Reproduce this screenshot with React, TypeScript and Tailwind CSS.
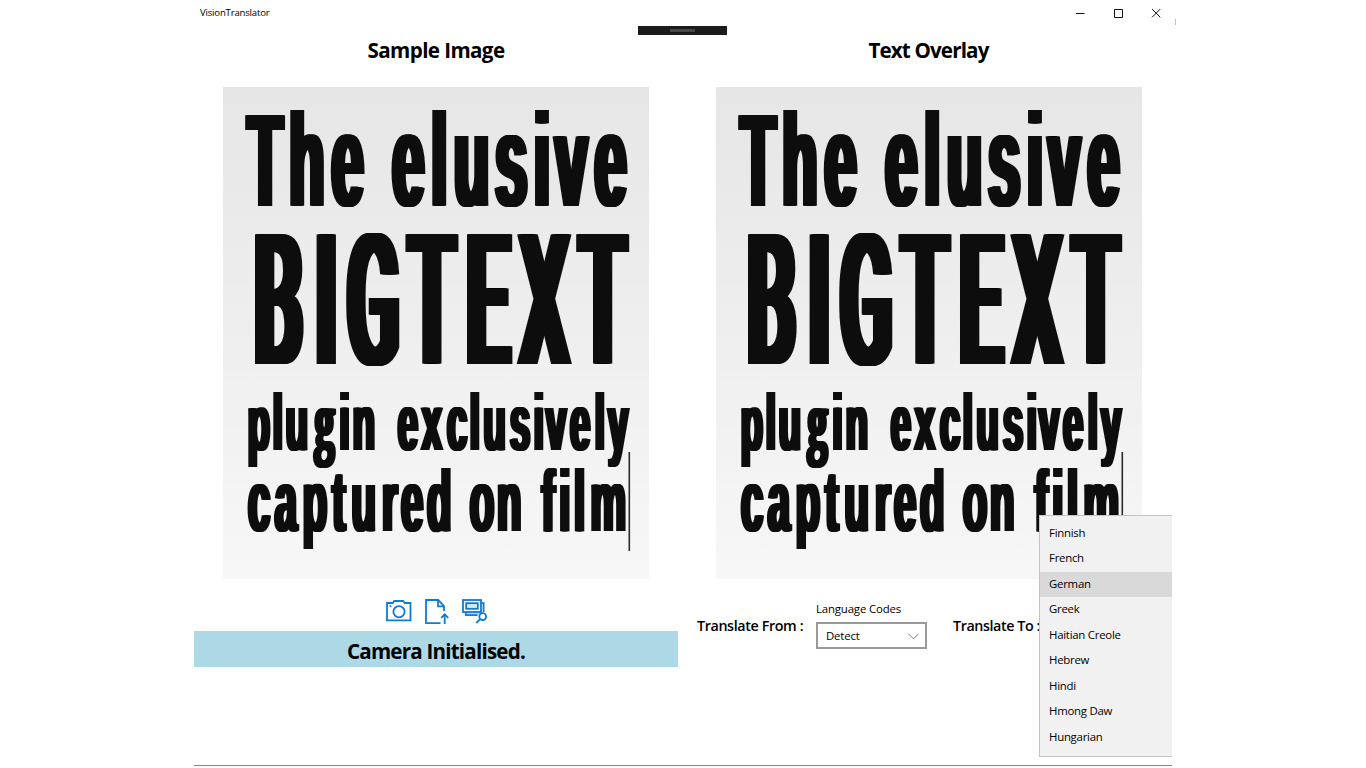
import React from "react";

type Line = { text: string; y: number; size: number; sx: number; spread: string; face: string; xs: number[] };

const NARROW = "font-['Liberation_Sans',sans-serif] font-bold";
const TITLE = "font-['Roboto',sans-serif] font-medium";

const LINES: Line[] = [
  { text: "The elusive", y: 118.5, size: 131, sx: 0.44, spread: "wide", face: NARROW, xs: [42.2, 83.9, 124.6, 155, 185.2, 216.2, 248.6, 288.2, 318.9, 348.2, 387.6] },
  { text: "BIGTEXT", y: 277, size: 181, sx: 0.42, spread: "title", face: TITLE, xs: [55.6, 103.2, 150.2, 208.9, 264.9, 321.2, 379.6] },
  { text: "plugin exclusively", y: 363, size: 79, sx: 0.46, spread: "slim", face: NARROW, xs: [35.9, 54.9, 73.9, 101.6, 121.6, 140.9, 160, 184.9, 208.9, 234.2, 251.9, 271.6, 297.2, 315.9, 333.2, 357.2, 376.9, 395.2] },
  { text: "captured on film", y: 444, size: 87, sx: 0.46, spread: "slim", face: NARROW, xs: [36.2, 62.9, 91.9, 115.9, 140.6, 166.9, 189.2, 216.2, 237, 258.9, 286.2, 305, 325.2, 341.9, 356.6, 385.2] },
];

const SPREADS: Record<string, number[]> = {
  slim: [-2.2, -1.1, 0, 1.1, 2.2],
  wide: [-3, -2, -1, 0, 1, 2, 3],
  title: [-5, -4, -3, -2, -1, 0, 1, 2, 3, 4, 5],
};

function Poster({ id }: { id: string }) {
  return (
    <svg width="426" height="492" viewBox="0 0 426 492" className="block">
      <defs>
        <linearGradient id={`${id}-shade`} x1="0" y1="0" x2="0" y2="1">
          <stop offset="0" stopColor="#e6e6e6" />
          <stop offset="0.6" stopColor="#f0f0f0" />
          <stop offset="1" stopColor="#f7f7f7" />
        </linearGradient>
        {Object.entries(SPREADS).map(([name, offsets]) => (
          <filter key={name} id={`${id}-${name}`} filterUnits="userSpaceOnUse" x="0" y="0" width="426" height="492">
            {offsets.map((dx, i) => (
              <feOffset key={i} in="SourceGraphic" dx={dx} result={`s${i}`} />
            ))}
            <feMerge>
              {offsets.map((_, i) => (
                <feMergeNode key={i} in={`s${i}`} />
              ))}
            </feMerge>
          </filter>
        ))}
      </defs>
      <rect width="426" height="492" fill={`url(#${id}-shade)`} />
      {LINES.map((l) => (
        <g key={l.text} filter={`url(#${id}-${l.spread})`}>
          <text
            transform={`scale(${l.sx} 1)`}
            x={l.xs.map((v) => (v / l.sx).toFixed(1)).join(" ")}
            y={l.y}
            fontSize={l.size}
            textAnchor="middle"
            fill="#0e0e0e"
            className={l.face}
            style={{ fontVariantLigatures: "none" }}
          >
            {l.text.split("g").map((part, i) => (
              <React.Fragment key={i}>
                {i > 0 && <tspan fontSize={76} className="font-['Open_Sans',sans-serif] font-bold">g</tspan>}
                {part}
              </React.Fragment>
            ))}
          </text>
        </g>
      ))}
      <rect x="405.5" y="365" width="1.6" height="99" fill="#2b2b2b" />
    </svg>
  );
}

const LANGUAGES = ["Finnish", "French", "German", "Greek", "Haitian Creole", "Hebrew", "Hindi", "Hmong Daw", "Hungarian"];

function CameraIcon() {
  return (
    <svg width="26" height="22" viewBox="0 0 26 22" fill="none" stroke="#0f7bd4" strokeWidth="1.8">
      <path d="M1 3H6.8L8.3 1H17.2L18.7 3H24.5V20.4H1Z" />
      <circle cx="13" cy="11.7" r="5.6" />
      <path d="M3.6 6.2H5.4" />
    </svg>
  );
}

function UploadIcon() {
  return (
    <svg width="24" height="26" viewBox="0 0 24 26" fill="none" stroke="#0f7bd4" strokeWidth="1.8">
      <path d="M15.5 24.2H1V1H13.2L19 7V12" />
      <path d="M13 1V7.3H19" />
      <path d="M19.7 25V15.2M16.2 18.8L19.7 15.2L23.2 18.8" />
    </svg>
  );
}

function PreviewIcon() {
  return (
    <svg width="26" height="25" viewBox="0 0 26 25" fill="none" stroke="#0f7bd4" strokeWidth="1.8">
      <path d="M4.6 13.8H21V14L16 16H4.6Z" fill="#b5d7f2" stroke="none" />
      <path d="M19 4.2H21.6V13M3.8 13V16.2H15.5" />
      <rect x="1" y="1" width="18" height="12" fill="#fff" />
      <rect x="4.2" y="4.2" width="11.6" height="5.6" fill="#d8eaf8" />
      <circle cx="20.7" cy="17.6" r="3.4" fill="#fff" />
      <path d="M18.2 20.1L14.3 24" />
    </svg>
  );
}

export default function App() {
  return (
    <div className="relative h-[768px] w-[1366px] overflow-hidden bg-white font-['Open_Sans','Noto_Sans',sans-serif] text-black">
      <div className="ml-[194px] flex h-[766px] w-[978px] flex-col border-b border-[#4b98d1]">
        <header className="flex h-[26px] shrink-0 items-center justify-between pl-[6px]">
          <span className="text-[9.6px] tracking-[-0.2px]">VisionTranslator</span>
          <div className="flex items-center gap-[28px] pr-[11px]">
            <svg width="10" height="10" viewBox="0 0 10 10" stroke="#111"><path d="M1 5.5H9.5" /></svg>
            <svg width="10" height="10" viewBox="0 0 10 10" stroke="#111" fill="none"><path d="M1.5 1.5H9.5V9.5H1.5Z" /></svg>
            <svg width="10" height="10" viewBox="0 0 10 10" stroke="#111" fill="none"><path d="M1 1L9.3 9.3M9.3 1L1 9.3" /></svg>
          </div>
        </header>
        <main className="flex gap-2">
          <section className="flex w-[484px] flex-col">
            <h1 className="h-[61px] pt-[8px] text-center text-[20.6px] leading-8 font-bold tracking-[-0.6px]">Sample Image</h1>
            <div className="pl-[29px]"><Poster id="sample" /></div>
            <div className="flex h-[52px] items-start justify-center gap-[13px] pt-[20px] pl-px">
              <div className="pt-px"><CameraIcon /></div>
              <UploadIcon />
              <PreviewIcon />
            </div>
            <div className="flex h-[36px] items-center justify-center bg-[#add8e6] pt-[4px] text-[20.6px] font-bold tracking-[-0.8px]">Camera Initialised.</div>
          </section>
          <section className="flex w-[486px] flex-col">
            <h1 className="h-[61px] pt-[8px] pr-px text-center text-[20.6px] leading-8 font-bold tracking-[-0.85px]">Text Overlay</h1>
            <div className="pl-[30px]"><Poster id="overlay" /></div>
            <div className="flex items-start pt-[20px] pl-[11px]">
              <span className="w-[119px] pt-[15px] text-[14.3px] leading-6 font-semibold tracking-[-0.38px] whitespace-nowrap">Translate From :</span>
              <div className="w-[111px]">
                <div className="h-[23px] text-[11.4px] leading-5 tracking-[-0.15px]">Language Codes</div>
                <div className="flex h-[27px] items-center justify-between border-2 border-[#999] pt-px pr-[6px] pl-2 text-[11.4px] tracking-[-0.15px]">
                  Detect
                  <svg width="11" height="7" viewBox="0 0 11 7" fill="none" stroke="#777"><path d="M.5 .8L5.5 5.8L10.5 .8" /></svg>
                </div>
              </div>
              <span className="ml-[26px] pt-[15px] text-[14.3px] leading-6 font-semibold tracking-[-0.42px] whitespace-nowrap">Translate To :</span>
            </div>
          </section>
        </main>
      </div>
      <div className="absolute top-[26px] left-[638px] flex h-[9px] w-[89px] items-center justify-center bg-[#1b1b1b]">
        <div className="h-[3px] w-[25px] bg-[#474747]" />
      </div>
      <div className="absolute top-[19px] left-[1175px] h-[6px] w-px bg-[#a9cbe9]" />
      <ul className="absolute top-[515px] left-[1039px] h-[242px] w-[133px] border border-r-0 border-[#c4c4c4] bg-[#f1f1f1] pt-[4.5px] text-[11.4px] tracking-[-0.25px]">
        {LANGUAGES.map((name) => (
          <li key={name} className={name === "German" ? "h-[25.5px] bg-[#d9d9d9] pl-[9px] leading-[24px]" : "h-[25.5px] pl-[9px] leading-[24px]"}>
            {name}
          </li>
        ))}
      </ul>
    </div>
  );
}
